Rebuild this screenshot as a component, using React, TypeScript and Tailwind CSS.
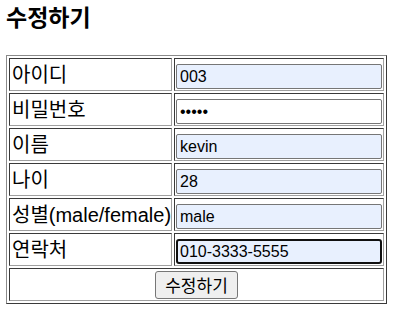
const rows = [
  { label: '아이디', value: '003', type: 'text', filled: true },
  { label: '비밀번호', value: '12345', type: 'password', filled: false },
  { label: '이름', value: 'kevin', type: 'text', filled: true },
  { label: '나이', value: '28', type: 'text', filled: true },
  { label: '성별(male/female)', value: 'male', type: 'text', filled: true },
];

const cell =
  'border border-t-[#3a3a3a] border-l-[#3a3a3a] border-r-[#a0a0a0] border-b-[#a0a0a0] p-px h-[33px]';

const App = () => {
  return (
    <div className="min-h-screen bg-white px-[6px] pt-[2px] text-black font-['Liberation_Sans','Noto_Sans_CJK_KR',sans-serif]">
      <h3 className="h-[53px] text-[23px] leading-[28px] font-bold font-['Noto_Sans_CJK_KR',sans-serif]">수정하기</h3>

      <form
        onSubmit={(e) => e.preventDefault()}
        className="w-[381px] grid grid-cols-[163px_210px] gap-[2px] p-[2px] border border-t-[#8a8a8a] border-l-[#8a8a8a] border-r-[#3a3a3a] border-b-[#3a3a3a]"
      >
        {rows.map((row) => (
          <div key={row.label} className="contents">
            <div className={`${cell} flex items-center text-[20px] leading-[24px] pl-[2px] whitespace-nowrap`}>{row.label}</div>
            <div className={`${cell} flex items-end`}>
              <input
                type={row.type}
                defaultValue={row.value}
                className={`w-full h-[25px] border border-[#767676] rounded-[2px] px-[3px] text-[16px] ${
                  row.filled ? 'bg-[#e8f0fe]' : 'bg-white'
                }`}
              />
            </div>
          </div>
        ))}

        <div className={`${cell} flex items-center text-[20px] leading-[24px] pl-[2px]`}>연락처</div>
        <div className={`${cell} flex items-end`}>
          <input
            type="text"
            defaultValue="010-3333-5555"
            className="w-full h-[25px] border-2 border-[#101010] rounded-[3px] px-[2px] text-[16px] bg-[#e8f0fe]"
          />
        </div>

        <div className={`${cell} col-span-2 flex items-center justify-center pt-[2px]`}>
          <button
            type="submit"
            className="w-[83px] h-[28px] bg-[#efefef] border border-[#767676] rounded-[3px] text-[17px] leading-[20px] font-['Noto_Sans_CJK_KR',sans-serif]"
          >
            수정하기
          </button>
        </div>
      </form>
    </div>
  );
};

export default App;
